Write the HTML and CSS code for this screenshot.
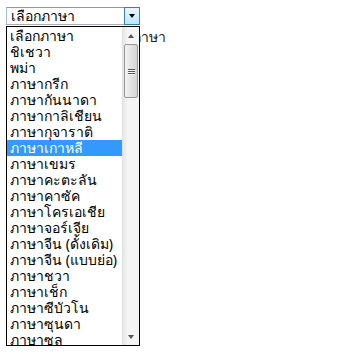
FILE: index.html
```html
<!DOCTYPE html>
<html lang="th">

<head>
    <meta charset="UTF-8">
    <title>เลือกภาษา</title>
    <link rel="stylesheet" href="styles.css">
</head>

<body>
    <div class="page">
        <div class="select">
            <span class="select-value">เลือกภาษา</span>
            <span class="select-btn"><span class="arrow-down"></span></span>
        </div>
        <p class="behind">ตรวจหาภาษา</p>

        <div class="listbox">
            <ul class="options">
                <li>เลือกภาษา</li>
                <li>ชิเชวา</li>
                <li>พม่า</li>
                <li>ภาษากรีก</li>
                <li>ภาษากันนาดา</li>
                <li>ภาษากาลิเชียน</li>
                <li>ภาษากุจาราติ</li>
                <li class="active">ภาษาเกาหลี</li>
                <li>ภาษาเขมร</li>
                <li>ภาษาคะตะลัน</li>
                <li>ภาษาคาซัค</li>
                <li>ภาษาโครเอเชีย</li>
                <li>ภาษาจอร์เจีย</li>
                <li>ภาษาจีน (ดั้งเดิม)</li>
                <li>ภาษาจีน (แบบย่อ)</li>
                <li>ภาษาชวา</li>
                <li>ภาษาเช็ก</li>
                <li>ภาษาซีบัวโน</li>
                <li>ภาษาซุนดา</li>
                <li>ภาษาซูลู</li>
            </ul>
            <div class="scrollbar">
                <div class="sb-btn"><span class="sb-up"></span></div>
                <div class="sb-track">
                    <div class="sb-thumb">
                        <span class="grip"></span>
                        <span class="grip"></span>
                        <span class="grip"></span>
                    </div>
                </div>
                <div class="sb-btn"><span class="sb-down"></span></div>
            </div>
        </div>
    </div>
</body>

</html>
```

FILE: styles.css
```css
* {
    margin: 0;
    padding: 0;
    box-sizing: border-box;
}

html,
body {
    height: 100%;
}

body {
    background: #fff;
    font-family: Tahoma, "Noto Sans", "DejaVu Sans", sans-serif;
    font-size: 14px;
    color: #000;
}

.page {
    position: relative;
    min-height: 355px;
    padding: 7px 6px;
}

.select {
    display: flex;
    width: 134px;
    height: 18px;
    border: 1px solid #abadb3;
    border-top-color: #7a9cc4;
    border-left-color: #a4b9d5;
    background: #fff;
}

.select-value {
    flex: 1;
    padding-left: 4px;
    line-height: 16px;
}

.select-btn {
    width: 16px;
    display: flex;
    align-items: center;
    justify-content: center;
    background: linear-gradient(#eaf6fd, #bee6fd);
    border: 1px solid #3c7fb1;
    margin: -1px -1px -1px 0;
}

.arrow-down {
    width: 0;
    height: 0;
    border-left: 3px solid transparent;
    border-right: 3px solid transparent;
    border-top: 4px solid #000;
}

.behind {
    padding: 4px 0 0 76px;
    line-height: 16px;
    color: #222;
}

.listbox {
    position: absolute;
    top: 26px;
    left: 6px;
    width: 134px;
    height: 320px;
    border: 1px solid #000;
    background: #fff;
    display: flex;
    overflow: hidden;
}

.options {
    flex: 1;
    list-style: none;
    padding-top: 1px;
}

.options li {
    height: 16px;
    line-height: 16px;
    padding-left: 3px;
    white-space: nowrap;
}

.options li.active {
    background: #3399ff;
    color: #fff;
}

.scrollbar {
    width: 17px;
    display: flex;
    flex-direction: column;
    background: linear-gradient(90deg, #e6e6e6, #f5f5f5 30%, #f5f5f5);
    border-left: 1px solid #e3e3e3;
}

.sb-btn {
    height: 17px;
    display: flex;
    align-items: center;
    justify-content: center;
}

.sb-up,
.sb-down {
    width: 0;
    height: 0;
    border-left: 3px solid transparent;
    border-right: 3px solid transparent;
}

.sb-up {
    border-bottom: 4px solid #555;
}

.sb-down {
    border-top: 4px solid #555;
}

.sb-track {
    flex: 1;
    padding: 0 1px;
}

.sb-thumb {
    height: 54px;
    border: 1px solid #979797;
    border-radius: 2px;
    background: linear-gradient(90deg, #f2f2f2, #e3e3e3 50%, #d6d6d6);
    display: flex;
    flex-direction: column;
    align-items: center;
    justify-content: center;
    gap: 1px;
}

.grip {
    width: 7px;
    height: 1px;
    background: #555;
    box-shadow: 0 1px 0 #fff;
}
```
